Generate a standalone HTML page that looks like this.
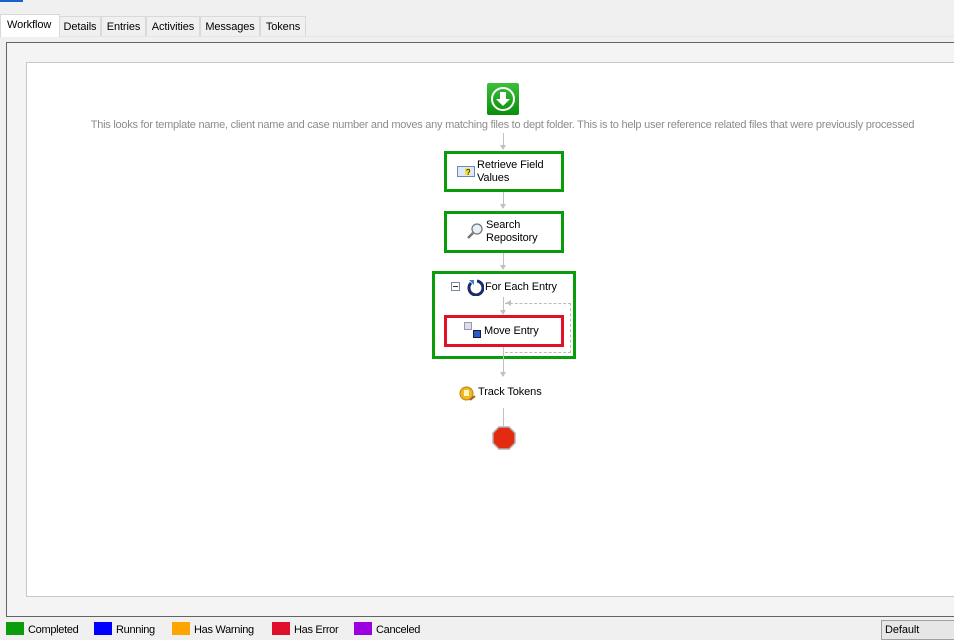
<!DOCTYPE html>
<html><head><meta charset="utf-8"><style>
*{margin:0;padding:0;box-sizing:border-box}
body{width:954px;height:635px;background:#f0f0f0;font-family:"Liberation Sans",sans-serif;font-size:11px;color:#000;position:relative;overflow:hidden;letter-spacing:-0.1px}
.abs{position:absolute}
.tab{position:absolute;top:16px;height:20px;border:1px solid #d9d9d9;border-bottom:none;background:#f0f0f0;font-size:11px;line-height:20px;text-align:center}
.box{position:absolute;border:3px solid #0a9c0a;background:#fff}
.vl{position:absolute;width:1px;background:#c0c0c0}
.arr{position:absolute;width:0;height:0;border-left:3px solid transparent;border-right:3px solid transparent;border-top:5px solid #c0c0c0}
.lg{position:absolute;top:622px;height:13px;font-size:11px;line-height:16px;letter-spacing:-0.3px}
.lg i{display:inline-block;width:18px;height:13px;vertical-align:top;margin-right:4px}
</style></head><body>
<div class="abs" style="left:0;top:0;width:23px;height:2px;background:#1a5fcf"></div>
<div class="abs" style="left:0;top:36px;width:954px;height:1px;background:#e3e3e3"></div>
<div class="abs" style="left:0;top:14px;width:60px;height:23px;background:#fff;border:1px solid #d9d9d9;border-bottom:none;font-size:11px;line-height:20px;padding-left:6px">Workflow</div>
<div class="tab" style="left:59px;width:42px">Details</div>
<div class="tab" style="left:101px;width:45px">Entries</div>
<div class="tab" style="left:146px;width:54px">Activities</div>
<div class="tab" style="left:200px;width:60px">Messages</div>
<div class="tab" style="left:260px;width:46px">Tokens</div>
<div class="abs" style="left:6px;top:42px;width:960px;height:575px;border:1px solid #646464;background:#f4f4f4"></div>
<div class="abs" style="left:26px;top:62px;width:940px;height:535px;border:1px solid #c8c8c8;background:#fff"></div>

<div class="abs" style="left:487px;top:83px;width:32px;height:32px;background:linear-gradient(#3cbf3c,#0a8f0a);border-radius:2px">
<svg width="32" height="32"><circle cx="16" cy="16" r="11" fill="none" stroke="#fff" stroke-width="2"/><path d="M13 9h6v7h4l-7 7-7-7h4z" fill="#fff"/></svg></div>
<div class="abs" style="left:0;width:1005px;top:119px;text-align:center;color:#8c8c8c;font-size:11px;letter-spacing:-0.25px;white-space:nowrap">This looks for template name, client name and case number and moves any matching files to dept folder. This is to help user reference related files that were previously processed</div>

<div class="vl" style="left:503px;top:133px;height:15px"></div><div class="arr" style="left:500px;top:145px"></div>
<div class="box" style="left:444px;top:151px;width:120px;height:41px"></div>
<svg class="abs" style="left:457px;top:166px" width="18" height="11"><rect x="0.5" y="0.5" width="17" height="10" fill="#dfe8f5" stroke="#6b88b8"/><rect x="8" y="2" width="5" height="7" fill="#f0e040"/><text x="9" y="9" font-size="8" font-family="Liberation Sans">?</text></svg>
<div class="abs" style="left:477px;top:159px;line-height:13px">Retrieve Field<br>Values</div>

<div class="vl" style="left:503px;top:192px;height:15px"></div><div class="arr" style="left:500px;top:204px"></div>
<div class="box" style="left:444px;top:211px;width:120px;height:42px"></div>
<svg class="abs" style="left:466px;top:222px" width="18" height="18"><circle cx="11" cy="7" r="5" fill="#e8f0f8" stroke="#777" stroke-width="1.3"/><path d="M7 11l-5 5" stroke="#777" stroke-width="2.5"/></svg>
<div class="abs" style="left:486px;top:219px;line-height:13px">Search<br>Repository</div>

<div class="vl" style="left:503px;top:253px;height:15px"></div><div class="arr" style="left:500px;top:265px"></div>
<div class="box" style="left:432px;top:271px;width:144px;height:88px"></div>
<div class="abs" style="left:451px;top:282px;width:9px;height:9px;border:1px solid #7a8aa0;background:#fff"></div>
<div class="abs" style="left:453px;top:286px;width:5px;height:1px;background:#333"></div>
<svg class="abs" style="left:466px;top:278px" width="18" height="18"><path d="M5 5 A7 7 0 1 0 11 3" fill="none" stroke="#1a2a6a" stroke-width="3"/><path d="M3 2l5 0 0 5z" fill="#3a80d0"/></svg>
<div class="abs" style="left:485px;top:281px">For Each Entry</div>
<div class="vl" style="left:503px;top:297px;height:14px"></div><div class="arr" style="left:500px;top:310px"></div>
<div class="abs" style="left:505px;top:303px;width:66px;height:50px;border:1px dashed #bbb;border-left:none"></div>
<div class="abs" style="left:506px;top:300px;width:0;height:0;border-top:3px solid transparent;border-bottom:3px solid transparent;border-right:5px solid #c0c0c0"></div>
<div class="box" style="left:444px;top:315px;width:120px;height:32px;border-color:#e0102a"></div>
<svg class="abs" style="left:464px;top:322px" width="18" height="16"><rect x="0.5" y="0.5" width="7" height="7" fill="#dde" stroke="#99a"/><rect x="9.5" y="8.5" width="7" height="7" fill="#2a5ad0" stroke="#123"/></svg>
<div class="abs" style="left:484px;top:325px">Move Entry</div>

<div class="vl" style="left:503px;top:347px;height:27px"></div><div class="arr" style="left:500px;top:372px"></div>
<svg class="abs" style="left:459px;top:386px" width="17" height="16"><circle cx="7.5" cy="7.5" r="6.5" fill="#f0b820" stroke="#c08010"/><rect x="5" y="4" width="5" height="6" fill="#fff6c0"/><path d="M11 14l5-4" stroke="#a06030" stroke-width="2"/></svg>
<div class="abs" style="left:478px;top:386px">Track Tokens</div>

<div class="vl" style="left:503px;top:408px;height:18px"></div>
<svg class="abs" style="left:492px;top:426px" width="24" height="24"><polygon points="7,1 17,1 23,7 23,17 17,23 7,23 1,17 1,7" fill="#e42a10" stroke="#b0b0b0" stroke-width="1.5"/></svg>

<div class="lg" style="left:6px"><i style="background:#0a9c0a"></i>Completed</div>
<div class="lg" style="left:94px"><i style="background:#0000ff"></i>Running</div>
<div class="lg" style="left:172px"><i style="background:#ffa500"></i>Has Warning</div>
<div class="lg" style="left:272px"><i style="background:#e0102a"></i>Has Error</div>
<div class="lg" style="left:354px"><i style="background:#9b00e0"></i>Canceled</div>
<div class="abs" style="left:881px;top:620px;width:80px;height:20px;border:1px solid #a0a0a0;background:#e6e6e6;padding-left:3px;line-height:18px">Default</div>
</body></html>
